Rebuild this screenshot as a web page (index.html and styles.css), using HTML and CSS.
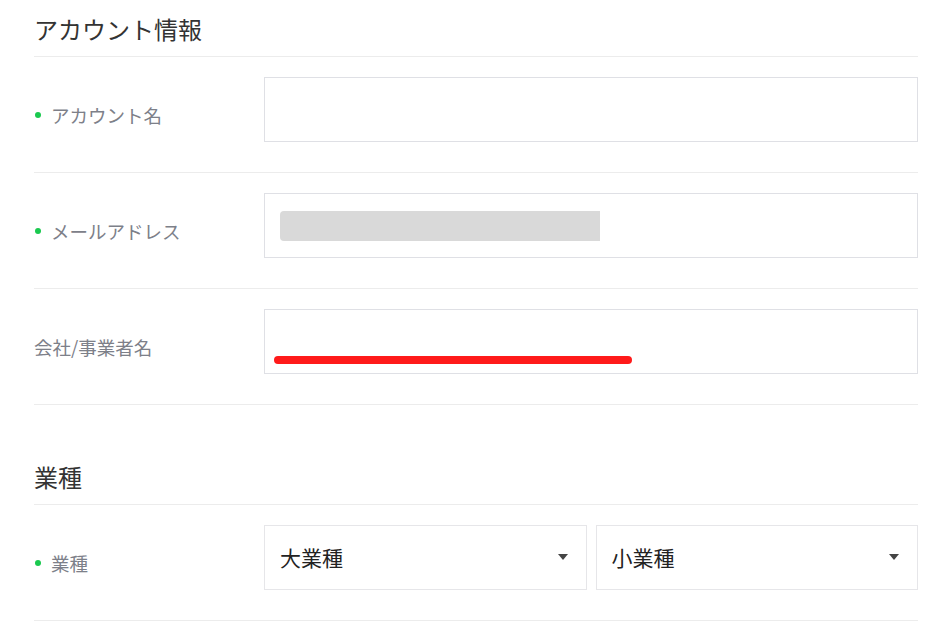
FILE: index.html
```html
<!DOCTYPE html>
<html lang="ja">
<head>
    <meta charset="UTF-8">
    <meta name="viewport" content="width=device-width, initial-scale=1.0">
    <title>アカウント情報</title>
    <link rel="stylesheet" href="styles.css">
</head>
<body>

    <div class="page">
        <!-- アカウント情報 -->
        <section class="section">
            <h2 class="section-title">アカウント情報</h2>

            <div class="row">
                <div class="label required">アカウント名</div>
                <div class="field">
                    <div class="input"></div>
                </div>
            </div>

            <div class="row">
                <div class="label required">メールアドレス</div>
                <div class="field">
                    <div class="input input-mail"><span class="masked"></span></div>
                </div>
            </div>

            <div class="row">
                <div class="label">会社/事業者名</div>
                <div class="field">
                    <div class="input input-company"><span class="mark"></span></div>
                </div>
            </div>
        </section>

        <!-- 業種 -->
        <section class="section section-industry">
            <h2 class="section-title">業種</h2>

            <div class="row">
                <div class="label required">業種</div>
                <div class="field selects">
                    <div class="select">大業種<span class="arrow"></span></div>
                    <div class="select">小業種<span class="arrow"></span></div>
                </div>
            </div>
        </section>
    </div>

</body>
</html>
```

FILE: styles.css
```css
body {
    font-family: 'Noto Sans CJK JP', 'Noto Sans', sans-serif;
    background-color: #fff;
    color: #333;
    margin: 0;
}

.page {
    padding: 0 28px 0 34px;
}

.section-title {
    margin: 0;
    padding: 15px 0 14px;
    font-size: 24px;
    line-height: 27px;
    font-weight: normal;
    color: #333;
    border-bottom: 1px solid #ececec;
}

.section-industry {
    margin-top: 43px;
}

.row {
    display: flex;
    align-items: center;
    padding: 20px 0 30px;
    border-bottom: 1px solid #ececec;
}

.label {
    width: 230px;
    flex-shrink: 0;
    padding-top: 10px;
    font-size: 18.5px;
    color: #7d8089;
    display: flex;
    align-items: center;
}

.label.required::before {
    content: "";
    width: 6px;
    height: 6px;
    border-radius: 50%;
    background-color: #1ac94f;
    margin: 0 10px 0 1px;
}

.field {
    flex: 1;
}

.input {
    box-sizing: border-box;
    height: 65px;
    border: 1px solid #dfe0e5;
    background-color: #fff;
}

.input-mail {
    padding: 17px 0 0 15px;
}

.masked {
    display: block;
    width: 320px;
    height: 30px;
    background-color: #d9d9d9;
    border-radius: 4px 0 0 4px;
}

.input-company {
    padding: 46px 0 0 9px;
}

.mark {
    display: block;
    width: 358px;
    height: 8px;
    background-color: #ff1a1a;
    border-radius: 4px;
}

.selects {
    display: flex;
    gap: 9px;
}

.select {
    flex: 1;
    box-sizing: border-box;
    height: 65px;
    border: 1px solid #e6e6e9;
    padding: 0 18px 2px 15px;
    display: flex;
    align-items: center;
    justify-content: space-between;
    font-size: 21px;
    color: #222;
}

.arrow {
    width: 0;
    height: 0;
    border-left: 5px solid transparent;
    border-right: 5px solid transparent;
    border-top: 6px solid #444;
}
```
